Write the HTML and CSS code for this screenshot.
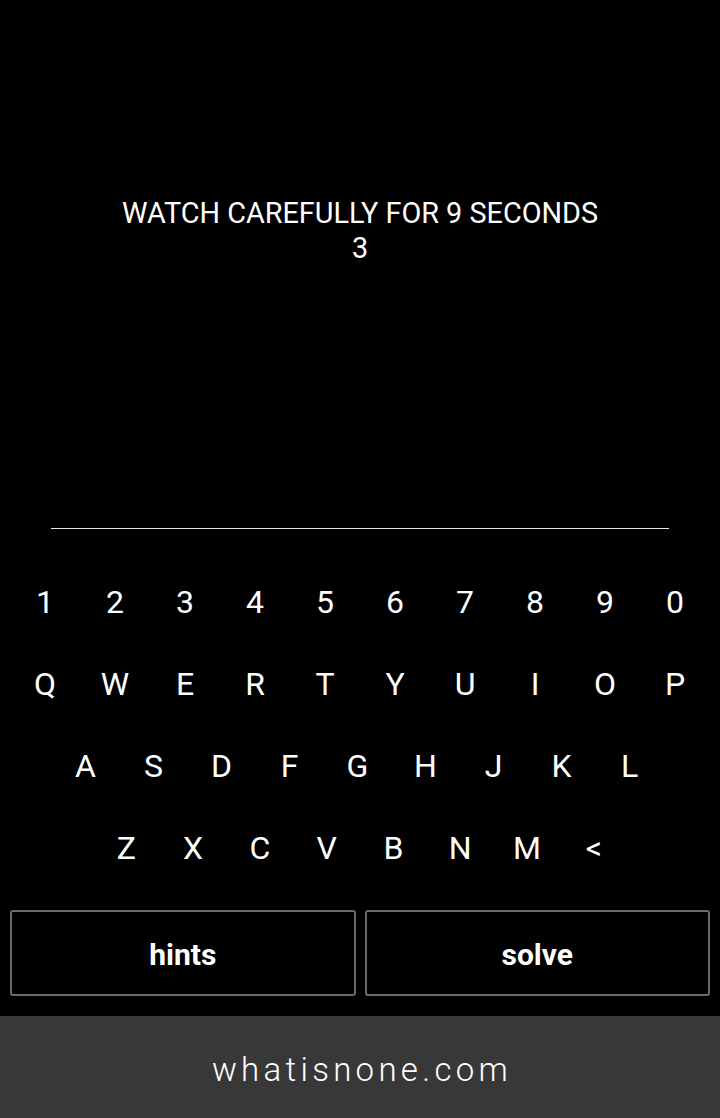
FILE: index.html
```html
<!DOCTYPE html>
<html>
<head>
<meta charset="utf-8">
<link rel="stylesheet" href="styles.css">
</head>
<body>
<div class="app">
  <main class="game">
    <div class="message">
      <div class="title">WATCH CAREFULLY FOR 9 SECONDS</div>
      <div class="count">3</div>
    </div>
    <div class="answer-line"></div>
    <div class="keyboard">
      <div class="row row-digits">
        <span class="key">1</span><span class="key">2</span><span class="key">3</span><span class="key">4</span><span class="key">5</span><span class="key">6</span><span class="key">7</span><span class="key">8</span><span class="key">9</span><span class="key">0</span>
      </div>
      <div class="row row-top">
        <span class="key">Q</span><span class="key">W</span><span class="key">E</span><span class="key">R</span><span class="key">T</span><span class="key">Y</span><span class="key">U</span><span class="key">I</span><span class="key">O</span><span class="key">P</span>
      </div>
      <div class="row row-mid">
        <span class="key">A</span><span class="key">S</span><span class="key">D</span><span class="key">F</span><span class="key">G</span><span class="key">H</span><span class="key">J</span><span class="key">K</span><span class="key">L</span>
      </div>
      <div class="row row-bottom">
        <span class="key">Z</span><span class="key">X</span><span class="key">C</span><span class="key">V</span><span class="key">B</span><span class="key">N</span><span class="key">M</span><span class="key">&lt;</span>
      </div>
    </div>
    <div class="actions">
      <button class="action">hints</button>
      <button class="action">solve</button>
    </div>
  </main>
  <footer class="footer">whatisnone.com</footer>
</div>
</body>
</html>
```
FILE: styles.css
```css
* { box-sizing: border-box; }
html, body {
  margin: 0;
  padding: 0;
  background: #000;
  color: #fff;
  font-family: Roboto, "Liberation Sans", sans-serif;
}
.app {
  width: 720px;
  height: 1118px;
  display: flex;
  flex-direction: column;
}
.game {
  flex: 1;
  display: flex;
  flex-direction: column;
}
.message {
  padding-top: 196px;
  height: 528px;
  text-align: center;
  font-size: 28.8px;
  line-height: 35px;
}
.answer-line {
  margin: 0 51px;
  height: 1px;
  background: #e6e6e6;
}
.keyboard {
  padding-top: 32px;
  display: flex;
  flex-direction: column;
}
.row {
  display: flex;
  justify-content: center;
  height: 82px;
}
.key {
  text-align: center;
  font-size: 32px;
  line-height: 82px;
}
.row-digits .key, .row-top .key { width: 70px; }
.row-mid { padding-right: 5px; }
.row-mid .key { width: 68px; }
.row-bottom .key { width: 66.8px; }
.actions {
  display: flex;
  gap: 9px;
  padding: 21px 10px 0;
}
.action {
  flex: 1;
  height: 86px;
  background: #000;
  color: #fff;
  border: 2px solid #6a6a6a;
  border-radius: 3px;
  font-family: Roboto, "Liberation Sans", sans-serif;
  font-weight: 700;
  font-size: 30px;
  padding: 2px 0 0;
}
.footer {
  margin-top: auto;
  height: 102px;
  padding-left: 4px;
  background: #383838;
  text-align: center;
  font-weight: 300;
  font-size: 33px;
  letter-spacing: 4.3px;
  line-height: 108px;
}
```
